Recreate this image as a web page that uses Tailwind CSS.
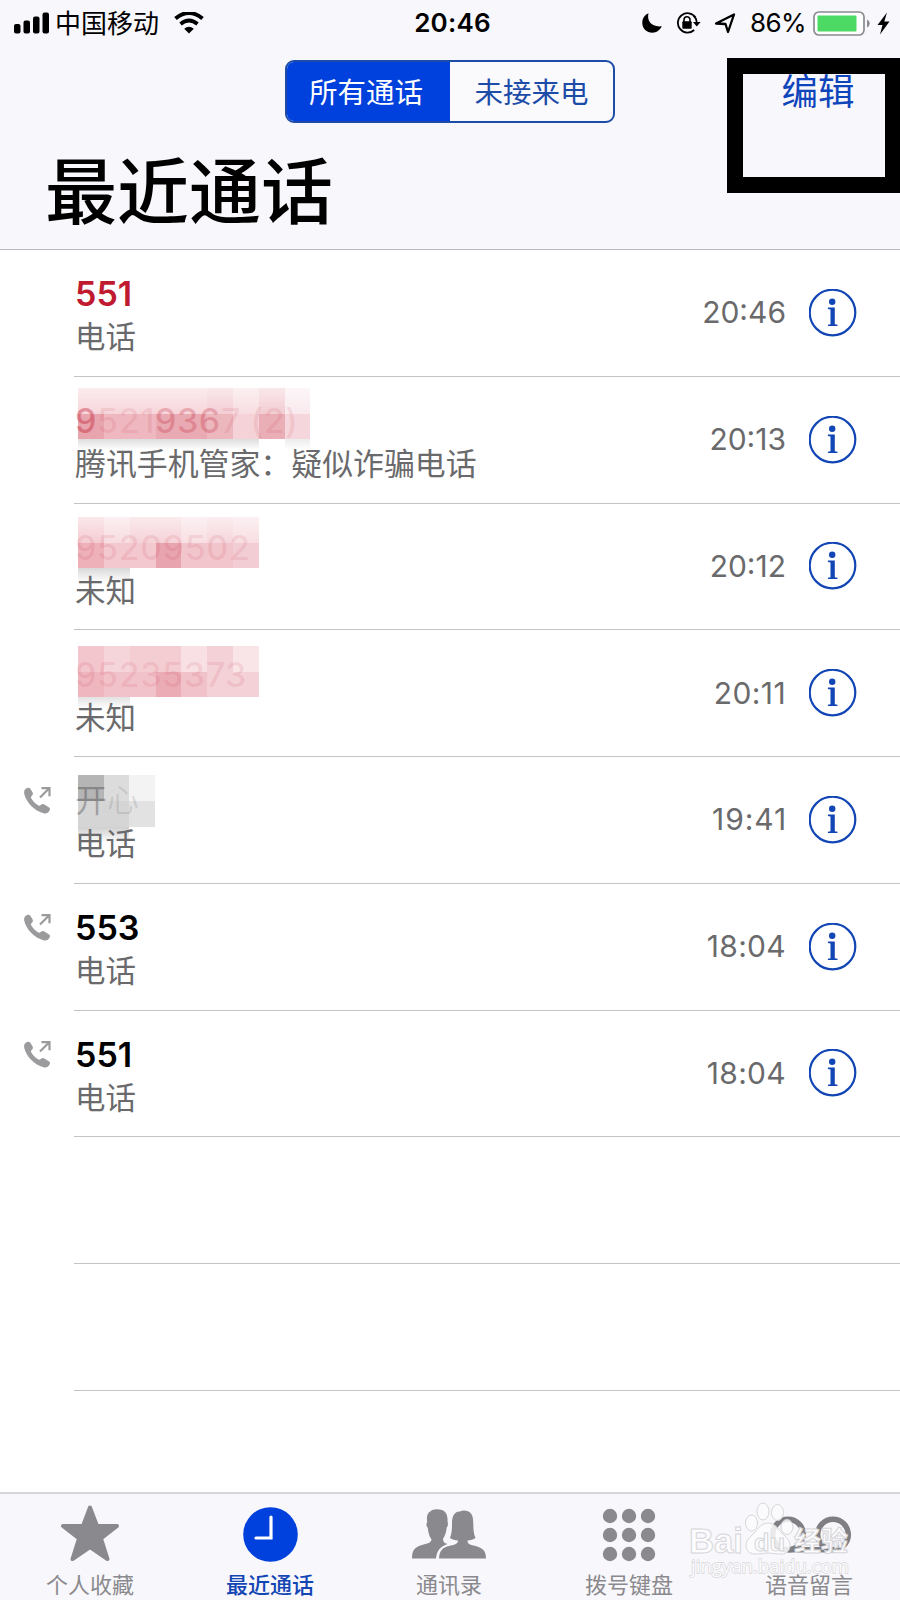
<!DOCTYPE html>
<html lang="zh-CN">
<head>
  <meta charset="UTF-8">
  <title>最近通话</title>
  <script src="https://cdn.jsdelivr.net/npm/@tailwindcss/browser@4"></script>
</head>
<body class="bg-white font-['Inter','Noto_Sans_CJK_SC',sans-serif] text-black">

<!-- shared icons -->
<svg class="hidden">
  <symbol id="info" viewBox="0 0 48 48">
    <circle cx="23.5" cy="23.500" r="22.800" fill="none" stroke="#1246b4" stroke-width="2.200"/>
    <circle cx="23.200" cy="12.800" r="3.200" fill="#1246b4"/>
    <path d="M18.900 18.600h6.900v16.600l2.700.5v1.300h-9.600v-1.300l2.600-.5V20.500l-2.600-.5z" fill="#1246b4"/>
  </symbol>
  <symbol id="outgoing" viewBox="0 0 27 27">
    <path d="M1.200 2.200C3 .6 5 .2 6 1.300l2.500 4c.8 1.400.4 2.500-.8 3.700-1 1-.9 1.600-.2 2.800 1.500 2.500 3.700 4.700 6.200 6.300 1.200.8 2 .8 3 0 1.400-1.200 2.500-1.300 3.700-.5l4.700 2.900c1.300.9 1.200 2.300-.1 4-1.200 1.500-3 2.300-5.500 1.700C10.500 24 1.800 15 .2 6.500-.1 4.700.2 3.200 1.200 2.200z" fill="#9b9b9d"/>
    <path d="M16 10.500L25 1.500M17.500 1.200h8v8" fill="none" stroke="#9b9b9d" stroke-width="2.200"/>
  </symbol>
</svg>

<div class="w-[900px] h-[1600px] flex flex-col overflow-hidden">

  <!-- Header -->
  <header class="h-[250px] shrink-0 bg-[#f8f7fb] border-b border-[#bcbcc0]">

    <!-- Status bar -->
    <div class="h-[46px] grid grid-cols-[1fr_auto_1fr] items-center pl-[14px] pr-[10px]">
      <div class="flex items-center">
        <svg class="w-[36px] h-[22px]" viewBox="0 0 36 22">
          <rect x="0" y="12" width="6.500" height="9.500" rx="2"/>
          <rect x="9.500" y="8.500" width="6.500" height="13" rx="2"/>
          <rect x="19" y="4.500" width="6.500" height="17" rx="2"/>
          <rect x="28.500" y="0.500" width="6.500" height="21" rx="2"/>
        </svg>
        <span class="ml-[5px] pt-[2px] text-[26px] leading-none">中国移动</span>
        <svg class="ml-[15px] w-[30px] h-[22px]" viewBox="0 0 30 22">
          <path d="M1.500 6.500Q15-4.500 28.500 6.500" fill="none" stroke="#000" stroke-width="4"/>
          <path d="M6.500 12Q15 5 23.500 12" fill="none" stroke="#000" stroke-width="3.800"/>
          <path d="M10.200 16.700Q15 12.800 19.800 16.700L15 21.500z"/>
        </svg>
      </div>
      <span class="text-[26px] leading-none font-semibold tracking-[0.2px] pl-[1px]">20:46</span>
      <div class="flex items-center justify-end">
        <svg class="w-[20px] h-[20px]" viewBox="0 0 20 20">
          <path d="M6.500.3C4.600 7.800 9.500 14.500 19.800 13.300 17.800 17.500 14.500 19.700 10.500 19.700 4.500 19.700.3 15.500.3 10 .3 5.500 2.500 2 6.500.3z"/>
        </svg>
        <svg class="ml-[14px] w-[25px] h-[22px]" viewBox="0 0 25 22">
          <path d="M19.500 5.300A9.700 9.700 0 1 0 18.200 18M17.300 3.500A9.700 9.700 0 0 1 20.700 11" fill="none" stroke="#000" stroke-width="1.800"/>
          <path d="M17 10h7.600l-3.800 4.500z"/>
          <rect x="6.300" y="9.300" width="9.400" height="7.500" rx="1"/>
          <path d="M8 10V7.800a3 3 0 0 1 6 0V10" fill="none" stroke="#000" stroke-width="1.600"/>
        </svg>
        <svg class="ml-[13px] w-[22px] h-[21px]" viewBox="0 0 22 21">
          <path d="M2 10.500L20 1.500 14 19l-2.500-8z" fill="none" stroke="#000" stroke-width="2.300" stroke-linejoin="round"/>
        </svg>
        <span class="ml-[14px] text-[26px] leading-none tracking-[-0.600px]">86%</span>
        <svg class="ml-[7px] w-[57px] h-[25px]" viewBox="0 0 57 25">
          <rect x="1" y="1" width="50" height="23" rx="5" fill="#fff" stroke="#8b8a90" stroke-width="1.700"/>
          <rect x="4.500" y="4.500" width="39" height="16" rx="1" fill="#4cd964"/>
          <path d="M54 8.500q2.800 1.500 2.800 4t-2.800 4z" fill="#8b8a90"/>
        </svg>
        <svg class="ml-[7px] w-[13px] h-[23px]" viewBox="0 0 12 23">
          <path d="M9.500.5L0 13h5L2.500 22.500 12 9.500H6.800z"/>
        </svg>
      </div>
    </div>

    <!-- Segmented control and edit button -->
    <div class="relative flex justify-center pt-[14px]">
      <div class="w-[330px] h-[63px] flex rounded-[9px] border-2 border-[#1c4ba8] bg-[#fafafd] overflow-hidden text-[28.500px]">
        <button class="w-[163px] pt-[3px] pr-[5px] bg-[#0040dd] text-white">所有通话</button>
        <button class="flex-1 pt-[3px] text-[#1c4ba8]">未接来电</button>
      </div>
      <button class="absolute left-[727px] top-[12px] w-[173px] h-[135px] border-[16px] border-r-[15px] border-black flex justify-center">
        <span class="text-[36.500px] leading-[36px] text-[#0f45bb] ml-[8px]">编辑</span>
      </button>
    </div>

    <h1 class="mt-[33px] pl-[45px] text-[72px] leading-[72px] font-medium">最近通话</h1>
  </header>

  <!-- Call list -->
  <main class="flex-1 min-h-0">
    <div class="h-[126.750px] flex">
      <div class="w-[74px] shrink-0"></div>
      <div class="flex-1 flex items-center border-b border-[#c4c4c6] pr-[43px]">
        <div class="flex-1 pt-[6px] pl-[1px]">
          <div class="text-[34px] leading-[42px] font-semibold text-[#c01a30]">551</div>
          <div class="text-[30.500px] leading-[43px] text-[#6a6a6c]">电话</div>
        </div>
        <span class="text-[30px] text-[#6a6a6c]">20:46</span>
        <svg class="ml-[23px] w-[48px] h-[48px]"><use href="#info"/></svg>
      </div>
    </div>

    <div class="relative h-[126.750px] flex">
      <!-- mosaic over the number -->
      <svg class="absolute left-[77px] top-[11px] w-[233px] h-[68px]" viewBox="-1 0 233 68" shape-rendering="crispEdges">
        <defs>
          <linearGradient id="fade" x2="0" y2="1"><stop stop-color="#fff" stop-opacity=".55"/><stop offset="1" stop-color="#fff" stop-opacity="0"/></linearGradient>
          <linearGradient id="shade" x2="0" y2="1"><stop stop-color="#cfcfd1"/><stop offset="1" stop-color="#cfcfd1" stop-opacity="0"/></linearGradient>
        </defs>
        <rect width="129" height="26" fill="#f6d5da"/>
        <rect x="129" width="26" height="26" fill="#f3cdd4"/>
        <rect x="155" width="26" height="26" fill="#f7dde1"/>
        <rect x="181" width="26" height="26" fill="#f2ccd2"/>
        <rect x="207" width="25" height="26" fill="#f9eaee"/>
        <rect width="232" height="26" fill="url(#fade)"/>
        <rect y="26" width="26" height="25" fill="#e9a5ae"/>
        <rect x="26" y="26" width="52" height="25" fill="#efb8c0"/>
        <rect x="78" y="26" width="51" height="25" fill="#e9aab3"/>
        <rect x="129" y="26" width="26" height="25" fill="#edb7be"/>
        <rect x="155" y="26" width="26" height="25" fill="#f4d2d7"/>
        <rect x="181" y="26" width="26" height="25" fill="#e9aeb6"/>
        <rect x="207" y="26" width="25" height="25" fill="#f5d6dc"/>
        <rect y="51" width="181" height="11" fill="url(#shade)" opacity=".7"/>
        <rect x="207" y="51" width="25" height="11" fill="url(#shade)" opacity=".4"/>
      </svg>
      <div class="w-[74px] shrink-0"></div>
      <div class="relative flex-1 flex items-center border-b border-[#c4c4c6] pr-[43px]">
        <div class="flex-1 pt-[6px] pl-[1px]">
          <div class="text-[34px] leading-[42px] tracking-[0.600px] font-medium text-[#c01a30]/10"><span class="text-[#c01a30]/40">9</span>521<span class="text-[#c01a30]/25">936</span>7 (2)</div>
          <div class="text-[30.900px] leading-[43px] text-[#6a6a6c]">腾讯手机管家：疑似诈骗电话</div>
        </div>
        <span class="text-[30px] text-[#6a6a6c]">20:13</span>
        <svg class="ml-[23px] w-[48px] h-[48px]"><use href="#info"/></svg>
      </div>
    </div>

    <div class="relative h-[126.750px] flex">
      <svg class="absolute left-[77px] top-[13px] w-[182px] h-[66px]" viewBox="-1 0 182 66" shape-rendering="crispEdges">
        <rect width="26" height="26" fill="#f5ccd3"/>
        <rect x="26" width="26" height="26" fill="#f7dce0"/>
        <rect x="52" width="51" height="26" fill="#f5d2d8"/>
        <rect x="103" width="26" height="26" fill="#f8dfe3"/>
        <rect x="129" width="26" height="26" fill="#f6d6dc"/>
        <rect x="155" width="26" height="26" fill="#f8dee2"/>
        <rect width="181" height="26" fill="url(#fade)"/>
        <rect y="26" width="26" height="25" fill="#eeb1ba"/>
        <rect x="26" y="26" width="52" height="25" fill="#f3c8cf"/>
        <rect x="78" y="26" width="25" height="25" fill="#e8a5af"/>
        <rect x="103" y="26" width="52" height="25" fill="#f2c5cc"/>
        <rect x="155" y="26" width="26" height="25" fill="#f3cdd4"/>
        <rect y="51" width="52" height="15" fill="url(#shade)" opacity=".8"/>
      </svg>
      <div class="w-[74px] shrink-0"></div>
      <div class="relative flex-1 flex items-center border-b border-[#c4c4c6] pr-[43px]">
        <div class="flex-1 pt-[6px] pl-[1px]">
          <div class="text-[34px] leading-[42px] tracking-[0.600px] font-medium text-[#c01a30]/10">95209502</div>
          <div class="text-[30.500px] leading-[43px] text-[#6a6a6c]">未知</div>
        </div>
        <span class="text-[30px] text-[#6a6a6c]">20:12</span>
        <svg class="ml-[23px] w-[48px] h-[48px]"><use href="#info"/></svg>
      </div>
    </div>

    <div class="relative h-[126.750px] flex">
      <svg class="absolute left-[77px] top-[16px] w-[182px] h-[63px]" viewBox="-1 0 182 63" shape-rendering="crispEdges">
        <rect width="26" height="26" fill="#f3c5cd"/>
        <rect x="26" width="26" height="26" fill="#f6d5da"/>
        <rect x="52" width="51" height="26" fill="#f4cdd3"/>
        <rect x="103" width="26" height="26" fill="#f8e0e4"/>
        <rect x="129" width="26" height="26" fill="#f3d1d7"/>
        <rect x="155" width="26" height="26" fill="#f9e5e8"/>
        <rect y="26" width="26" height="25" fill="#efb6bf"/>
        <rect x="26" y="26" width="52" height="25" fill="#f2c2ca"/>
        <rect x="78" y="26" width="25" height="25" fill="#ebacb5"/>
        <rect x="103" y="26" width="26" height="25" fill="#f1c2c9"/>
        <rect x="129" y="26" width="52" height="25" fill="#f4d1d7"/>
        <rect y="51" width="52" height="12" fill="url(#shade)" opacity=".6"/>
      </svg>
      <div class="w-[74px] shrink-0"></div>
      <div class="relative flex-1 flex items-center border-b border-[#c4c4c6] pr-[43px]">
        <div class="flex-1 pt-[6px] pl-[1px]">
          <div class="text-[34px] leading-[42px] tracking-[0.600px] font-medium text-[#c01a30]/10">95235373</div>
          <div class="text-[30.500px] leading-[43px] text-[#6a6a6c]">未知</div>
        </div>
        <span class="text-[30px] tracking-[0.400px] text-[#6a6a6c]">20:11</span>
        <svg class="ml-[23px] w-[48px] h-[48px]"><use href="#info"/></svg>
      </div>
    </div>

    <div class="relative h-[126.750px] flex">
      <svg class="absolute left-[77px] top-[18px] w-[78px] h-[68px]" viewBox="-1 0 78 68" shape-rendering="crispEdges">
        <rect width="26" height="26" fill="#b5b5b6"/>
        <rect x="26" width="25" height="26" fill="#dcdcdd"/>
        <rect x="51" width="26" height="26" fill="#f3f3f4"/>
        <rect y="26" width="51" height="26" fill="#d5d5d6"/>
        <rect x="51" y="26" width="26" height="26" fill="#e2e2e3"/>
        <rect y="52" width="51" height="16" fill="url(#shade)"/>
      </svg>
      <div class="w-[74px] shrink-0 pl-[24px] pt-[30px]"><svg class="w-[27px] h-[27px]"><use href="#outgoing"/></svg></div>
      <div class="relative flex-1 flex items-center border-b border-[#c4c4c6] pr-[43px]">
        <div class="flex-1 pt-[6px] pl-[1px]">
          <div class="text-[32px] leading-[42px] text-black/10"><span class="text-black/25">开</span>心</div>
          <div class="text-[30.500px] leading-[43px] text-[#6a6a6c]">电话</div>
        </div>
        <span class="text-[30px] tracking-[0.900px] -mr-px text-[#6a6a6c]">19:41</span>
        <svg class="ml-[23px] w-[48px] h-[48px]"><use href="#info"/></svg>
      </div>
    </div>

    <div class="h-[126.750px] flex">
      <div class="w-[74px] shrink-0 pl-[24px] pt-[30px]"><svg class="w-[27px] h-[27px]"><use href="#outgoing"/></svg></div>
      <div class="flex-1 flex items-center border-b border-[#c4c4c6] pr-[43px]">
        <div class="flex-1 pt-[6px] pl-[1px]">
          <div class="text-[34px] leading-[42px] font-semibold">553</div>
          <div class="text-[30.500px] leading-[43px] text-[#6a6a6c]">电话</div>
        </div>
        <span class="text-[30px] tracking-[0.300px] text-[#6a6a6c]">18:04</span>
        <svg class="ml-[23px] w-[48px] h-[48px]"><use href="#info"/></svg>
      </div>
    </div>

    <div class="h-[126.750px] flex">
      <div class="w-[74px] shrink-0 pl-[24px] pt-[30px]"><svg class="w-[27px] h-[27px]"><use href="#outgoing"/></svg></div>
      <div class="flex-1 flex items-center border-b border-[#c4c4c6] pr-[43px]">
        <div class="flex-1 pt-[6px] pl-[1px]">
          <div class="text-[34px] leading-[42px] font-semibold">551</div>
          <div class="text-[30.500px] leading-[43px] text-[#6a6a6c]">电话</div>
        </div>
        <span class="text-[30px] tracking-[0.300px] text-[#6a6a6c]">18:04</span>
        <svg class="ml-[23px] w-[48px] h-[48px]"><use href="#info"/></svg>
      </div>
    </div>

    <!-- empty rows -->
    <div class="h-[126.750px] ml-[74px] border-b border-[#c4c4c6]"></div>
    <div class="h-[126.750px] ml-[74px] border-b border-[#c4c4c6]"></div>
  </main>

  <!-- Tab bar -->
  <nav class="relative h-[108px] shrink-0 grid grid-cols-5 bg-[#f8f7fb] border-t-2 border-[#d6d6d9] text-[22px] leading-[26px] text-[#8a898d]">
    <div class="flex flex-col items-center">
      <svg class="mt-[9px] w-[60px] h-[60px]" viewBox="0 0 60 60">
        <path d="M30 4.500l7 18.500h20L41 35.500l6.500 20.500L30 44 12.500 56 19 35.500 3 23h20z" fill="#8a898d" stroke="#8a898d" stroke-width="4" stroke-linejoin="round"/>
      </svg>
      <span class="mt-[9px]">个人收藏</span>
    </div>
    <div class="flex flex-col items-center text-[#1246b4] font-medium">
      <svg class="mt-[9px] w-[60px] h-[60px]" viewBox="0 0 60 60">
        <circle cx="30.500" cy="31.500" r="27.300" fill="#0040dd"/>
        <path d="M31 14v21H16" fill="none" stroke="#fff" stroke-width="3.200" stroke-linecap="round"/>
      </svg>
      <span class="mt-[9px]">最近通话</span>
    </div>
    <div class="flex flex-col items-center pr-[2px]">
      <svg class="mt-[10px] w-[74px] h-[60px]" viewBox="0 0 74 60">
        <g fill="#8a898d">
          <path d="M0 54.500C0 46 3 43 10 41c7-2 9-2.500 9.500-5.500C17 32 16 27 15.700 23.500c-1.500-1-1.700-4-.5-5.500-.8-5 0-9 3-10.500C20 5.500 24 5 27 5.500c6 .5 9 4 8.500 12 .8 1.500.5 5-.8 6-.3 4-1.500 8-3.700 11.500.2 2.500 1 4 4.500 5-7 2.500-10.500 6-11.500 14.500z"/>
          <path d="M27 54.500C27.500 46 31 43.500 37 42c5-1.300 9-1.700 9-5.500-3-.3-6-.7-8-2.500 2-5 2-10 2-15C40 11 43.500 7 48 7.500c2-1.300 5-1.500 8-.3 4 1.500 5.300 6 5.300 12.300 0 5 .2 10.500 2.200 14.500-2 1.500-5 2.300-8 2.500 0 4 3 4.200 8 5.500 7 2 10.500 4.500 10.500 12.500z"/>
        </g>
      </svg>
      <span class="mt-[8px]">通讯录</span>
    </div>
    <div class="flex flex-col items-center pr-[2px]">
      <svg class="mt-[10px] w-[60px] h-[60px]" viewBox="0 0 60 60" fill="#8a898d">
        <circle cx="11" cy="12" r="7.200"/><circle cx="30" cy="12" r="7.200"/><circle cx="49" cy="12" r="7.200"/>
        <circle cx="11" cy="31" r="7.200"/><circle cx="30" cy="31" r="7.200"/><circle cx="49" cy="31" r="7.200"/>
        <circle cx="11" cy="50" r="7.200"/><circle cx="30" cy="50" r="7.200"/><circle cx="49" cy="50" r="7.200"/>
      </svg>
      <span class="mt-[8px]">拨号键盘</span>
    </div>
    <div class="flex flex-col items-center pr-[2px]">
      <svg class="mt-[9px] w-[84px] h-[60px]" viewBox="0 0 84 60" fill="none" stroke="#7f7e82" stroke-width="5.500">
        <circle cx="21" cy="31.500" r="15.300"/>
        <circle cx="66" cy="31.500" r="15.300"/>
        <path d="M21 46.800h45"/>
      </svg>
      <span class="mt-[9px]">语音留言</span>
    </div>

    <!-- watermark -->
    <svg class="absolute left-[688px] top-[6px] w-[170px] h-[84px]" viewBox="0 0 170 84" fill="#fcfbfd" stroke="#d6d6d9" stroke-width="1">
      <g fill-opacity=".85">
        <ellipse cx="63.500" cy="23" rx="6" ry="8"/>
        <ellipse cx="75" cy="11.500" rx="6" ry="8.500"/>
        <ellipse cx="89.500" cy="12.500" rx="6" ry="8"/>
        <ellipse cx="99" cy="27" rx="6" ry="7.500"/>
        <path d="M80 23c8 0 11 8 17 13 8 7 6 17-3 18-5 .5-9-1-14-1s-9 1.500-14 1c-9-1-11-11-3-18 6-5 9-13 17-13z"/>
      </g>
      <g font-family="Liberation Sans, Noto Sans CJK SC, sans-serif" font-weight="700">
        <text x="1" y="53" font-size="35" textLength="54" lengthAdjust="spacingAndGlyphs">Bai</text>
        <text x="66" y="51" font-size="24" textLength="31" lengthAdjust="spacingAndGlyphs">du</text>
        <text x="106" y="51" font-size="27" textLength="54">经验</text>
      </g>
      <text x="3" y="72.500" font-size="18.500" font-family="Open Sans, sans-serif" textLength="158" lengthAdjust="spacingAndGlyphs" paint-order="stroke" stroke-width="1.300">jingyan.baidu.com</text>
    </svg>
  </nav>
</div>

</body>
</html>
